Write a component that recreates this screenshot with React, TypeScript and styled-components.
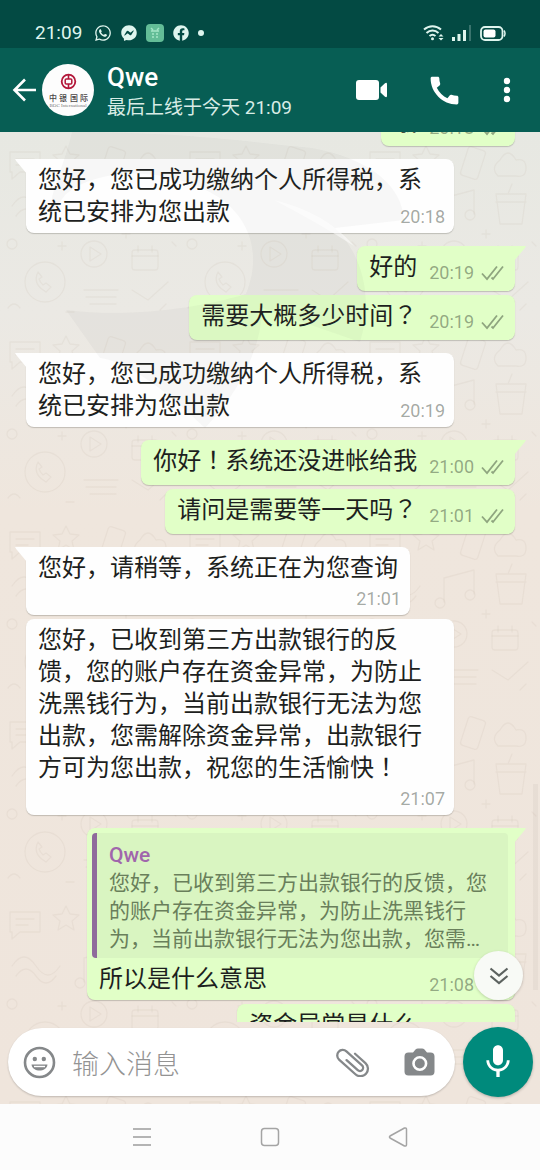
import React, { useLayoutEffect, useRef } from "react";
import styled, { createGlobalStyle, css } from "styled-components";
import { FaFacebook, FaFacebookMessenger, FaWhatsapp } from "react-icons/fa";
import { MdCall, MdMic } from "react-icons/md";

const GlobalStyle = createGlobalStyle`
  *, *::before, *::after { box-sizing: border-box; }
  body {
    margin: 0;
    font-family: Roboto, "Noto Sans CJK SC", sans-serif;
    color: #1d1f20;
  }
  button { border: 0; padding: 0; background: none; color: inherit; font: inherit; cursor: pointer; }
  svg { display: block; flex: none; }
`;

const Screen = styled.div`
  display: flex;
  flex-direction: column;
  height: 100vh;
  overflow: hidden;
`;

const StatusBar = styled.div`
  display: flex;
  align-items: center;
  justify-content: space-between;
  height: 48px;
  padding: 18px 34px 0 35px;
  background: #034a43;
  color: #dff5ee;
  font-size: 19px;
  line-height: 30px;
`;

const StatusGroup = styled.div<{ $gap: number }>`
  display: flex;
  align-items: center;
  gap: ${(p) => p.$gap}px;
`;

const Clock = styled.span`
  margin-right: 3px;
`;

const Header = styled.header`
  display: flex;
  align-items: center;
  height: 84px;
  padding: 0 6px 0 12px;
  background: #075e54;
  color: #fff;
  flex: none;
`;

const BackButton = styled.button`
  display: flex;
  align-items: center;
  gap: 6px;
`;

const Contact = styled.div`
  flex: 1;
  min-width: 0;
  padding: 4px 0 0 13px;
`;

const ContactName = styled.h1`
  margin: 0;
  font-size: 26px;
  font-weight: 500;
  line-height: 32px;
`;

const LastSeen = styled.p`
  margin: 0;
  font-size: 19px;
  line-height: 30px;
  color: #d8ece6;
  white-space: nowrap;
`;

const HeaderButton = styled.button<{ $width: number }>`
  display: flex;
  align-items: center;
  justify-content: center;
  width: ${(p) => p.$width}px;
  height: 56px;
`;

const Conversation = styled.main`
  position: relative;
  display: flex;
  flex: 1;
  flex-direction: column;
  min-height: 0;
  background: linear-gradient(#e7e8e2 0, #ebe9e4 180px, #efe6dd 380px, #efe5dc 100%);
`;

const Wallpaper = styled.svg`
  position: absolute;
  inset: 0;
  width: 100%;
  height: 100%;
`;

const Watermark = styled.svg`
  position: absolute;
  top: 0;
  left: 0;
  pointer-events: none;
`;

const MessageArea = styled.div`
  position: relative;
  flex: 1;
  min-height: 0;
`;

const MessageList = styled.div`
  display: flex;
  flex-direction: column;
  height: 100%;
  padding: 0 25px 8px 26px;
  overflow-y: auto;
  scrollbar-width: none;
`;

type Layout = "inline" | "tucked" | "below";

const tail = {
  in: css`
    border-top-left-radius: 0;
    &::before {
      content: "";
      position: absolute;
      top: 0;
      left: -11px;
      width: 12px;
      height: 15px;
      background: inherit;
      clip-path: polygon(0 0, 100% 0, 100% 100%, 10% 14%);
    }
  `,
  out: css`
    border-top-right-radius: 0;
    &::before {
      content: "";
      position: absolute;
      top: 0;
      right: -11px;
      width: 12px;
      height: 15px;
      background: inherit;
      clip-path: polygon(0 0, 100% 0, 90% 14%, 0 100%);
    }
  `,
};

const Bubble = styled.article<{ $side: "in" | "out"; $first: boolean }>`
  position: relative;
  flex: none;
  max-width: calc(100% - 61px);
  margin-top: ${(p) => (p.$first ? 13 : 4)}px;
  border-radius: 8px;
  align-self: ${(p) => (p.$side === "in" ? "flex-start" : "flex-end")};
  background: ${(p) => (p.$side === "in" ? "#fefefe" : "#e1ffc7")};
  box-shadow: 0 1px 1px rgba(60, 60, 50, 0.25);
  &:first-child { margin-top: 0; }
  ${(p) => p.$first && tail[p.$side]}
`;

const Quote = styled.blockquote`
  margin: 5px 7px 0 5px;
  padding: 8px 12px 5px;
  border-left: 5px solid #8f6a9c;
  border-radius: 4px;
  background: #d9f5c1;
`;

const Body = styled.div<{ $layout: Layout }>`
  display: flex;
  ${(p) =>
    p.$layout === "inline"
      ? css`
          align-items: flex-end;
          justify-content: space-between;
          gap: 12px;
          padding: 5px 11px 8px 12px;
          ${Quote} + & { padding-bottom: 5px; }
        `
      : css`
          flex-direction: column;
          padding: 5px 12px 6px;
        `}
`;

const MessageText = styled.p`
  margin: 0;
  font-size: 24px;
  line-height: 32px;
`;

const CenteredMark = styled.span`
  font-family: "Noto Sans CJK TC", sans-serif;
  line-height: 1;
`;

const Meta = styled.div<{ $layout: Layout }>`
  display: flex;
  align-items: center;
  gap: 7px;
  height: 20px;
  font-size: 18px;
  line-height: 20px;
  color: rgba(20, 30, 20, 0.4);
  ${(p) =>
    p.$layout !== "inline" &&
    css`
      align-self: flex-end;
      margin-top: ${p.$layout === "tucked" ? -21 : 5}px;
      margin-right: -3px;
    `}
`;

const QuoteAuthor = styled.div`
  font-size: 21px;
  font-weight: 500;
  line-height: 28px;
  color: #a066ac;
`;

const QuoteText = styled.p`
  display: -webkit-box;
  margin: 0;
  overflow: hidden;
  font-size: 21px;
  line-height: 28px;
  color: #697f5b;
  -webkit-box-orient: vertical;
  -webkit-line-clamp: 3;
`;

const ScrollDown = styled.button`
  position: absolute;
  right: 17px;
  bottom: 22px;
  display: flex;
  align-items: center;
  justify-content: center;
  width: 49px;
  height: 49px;
  border-radius: 50%;
  background: #f8faf6;
  box-shadow: 0 1px 3px rgba(0, 0, 0, 0.18);
`;

const ScrollThumb = styled.div`
  position: absolute;
  right: 2px;
  bottom: 32px;
  width: 5px;
  height: 206px;
  background: rgba(120, 100, 90, 0.06);
`;

const Composer = styled.form`
  position: relative;
  display: flex;
  align-items: center;
  gap: 8px;
  padding: 5px 7px 7px 8px;
`;

const InputPill = styled.div`
  display: flex;
  flex: 1;
  align-items: center;
  min-width: 0;
  height: 68px;
  padding: 0 20px 0 15px;
  border-radius: 34px;
  background: #fff;
  box-shadow: 0 1px 2px rgba(0, 0, 0, 0.2);
  color: #85888a;
`;

const MessageInput = styled.input`
  flex: 1;
  min-width: 0;
  height: 44px;
  margin-left: 16px;
  padding: 5px 0 0;
  border: 0;
  outline: 0;
  background: none;
  font-family: inherit;
  font-size: 27px;
  font-weight: 300;
  color: #1d1f20;
  &::placeholder { color: #939393; opacity: 1; }
`;

const PillButton = styled.button`
  display: flex;
  & + & { margin-left: 34px; }
`;

const MicButton = styled.button`
  display: flex;
  align-items: center;
  justify-content: center;
  width: 70px;
  height: 70px;
  border-radius: 50%;
  background: #008a7c;
  box-shadow: 0 1px 3px rgba(0, 0, 0, 0.25);
  color: #fff;
`;

const SystemNav = styled.nav`
  display: flex;
  flex: none;
  align-items: center;
  justify-content: center;
  height: 66px;
  background: #fcfcfc;
`;

const NavButton = styled.button`
  display: flex;
  align-items: center;
  justify-content: center;
  width: 128px;
  height: 48px;
`;

const Ticks = () => (
  <svg width="23" height="16" viewBox="0 0 23 16" fill="none" stroke="currentColor" strokeWidth="1.8" role="img" aria-label="已送达">
    <path d="M1 8.5 6 14 16 1.5M10.5 12.5 12 14 22 1.5" />
  </svg>
);

const Avatar = () => (
  <svg width="52" height="52" viewBox="0 0 52 52" role="img" aria-label="中银国际">
    <circle cx="26" cy="26" r="26" fill="#fdfdfd" />
    <g fill="none" stroke="#b3173a">
      <circle cx="26.5" cy="17.5" r="6.8" strokeWidth="1.8" />
      <rect x="23.2" y="15" width="6.6" height="5" rx="1" strokeWidth="1.5" />
      <path d="M26.5 11v4M26.5 20v4" strokeWidth="1.6" />
    </g>
    <text x="7" y="37" fontSize="8" fontWeight="500" fontFamily="'Noto Sans CJK SC', sans-serif" fill="#4a4546">
      <tspan x="7">中</tspan>
      <tspan x="17">银</tspan>
      <tspan x="28">国</tspan>
      <tspan x="38">际</tspan>
    </text>
    <text x="26" y="43" fontSize="5" textAnchor="middle" fontFamily="'Liberation Serif', serif" fill="#777">
      BOC International
    </text>
  </svg>
);

interface Message {
  side: "in" | "out";
  time: string;
  text: string;
  layout: Layout;
  first?: boolean;
  quote?: { author: string; text: string };
}

const REPLY =
  "您好，已收到第三方出款银行的反馈，您的账户存在资金异常，为防止洗黑钱行为，当前出款银行无法为您出款，您需解除资金异常，出款银行方可为您出款，祝您的生活愉快！";

const messages: Message[] = [
  { side: "out", time: "20:18", text: "哦", layout: "inline" },
  { side: "in", time: "20:18", text: "您好，您已成功缴纳个人所得税，系统已安排为您出款", layout: "tucked", first: true },
  { side: "out", time: "20:19", text: "好的", layout: "inline", first: true },
  { side: "out", time: "20:19", text: "需要大概多少时间？", layout: "inline" },
  { side: "in", time: "20:19", text: "您好，您已成功缴纳个人所得税，系统已安排为您出款", layout: "tucked", first: true },
  { side: "out", time: "21:00", text: "你好！系统还没进帐给我", layout: "inline", first: true },
  { side: "out", time: "21:01", text: "请问是需要等一天吗？", layout: "inline" },
  { side: "in", time: "21:01", text: "您好，请稍等，系统正在为您查询", layout: "below", first: true },
  { side: "in", time: "21:07", text: REPLY, layout: "below" },
  { side: "out", time: "21:08", text: "所以是什么意思", layout: "inline", first: true, quote: { author: "Qwe", text: REPLY } },
  { side: "out", time: "21:08", text: "资金异常是什么", layout: "inline" },
];

// Question and exclamation marks sit in the middle of their cell, commas at its left.
const withCenteredMarks = (text: string) =>
  text.split(/([？！])/).map((part, i) =>
    part === "？" || part === "！" ? (
      <CenteredMark key={i} lang="zh-TW">
        {part}
      </CenteredMark>
    ) : (
      part
    ),
  );

const MessageBubble = ({ message }: { message: Message }) => (
  <Bubble $side={message.side} $first={!!message.first}>
    {message.quote && (
      <Quote>
        <QuoteAuthor>{message.quote.author}</QuoteAuthor>
        <QuoteText>{message.quote.text}</QuoteText>
      </Quote>
    )}
    <Body $layout={message.layout}>
      <MessageText>{withCenteredMarks(message.text)}</MessageText>
      <Meta $layout={message.layout}>
        <time>{message.time}</time>
        {message.side === "out" && <Ticks />}
      </Meta>
    </Body>
  </Bubble>
);

const FIRST_VISIBLE_OFFSET = 31;

export default function App() {
  const list = useRef<HTMLDivElement>(null);

  useLayoutEffect(() => {
    if (list.current) list.current.scrollTop = FIRST_VISIBLE_OFFSET;
  }, []);

  return (
    <Screen lang="zh-CN">
      <GlobalStyle />
      <StatusBar>
        <StatusGroup $gap={9}>
          <Clock>21:09</Clock>
          <FaWhatsapp size={18} />
          <FaFacebookMessenger size={16} />
          <svg width="18" height="18" viewBox="0 0 18 18">
            <rect width="18" height="18" rx="4" fill="#63bd97" />
            <path d="M5 4l2 2M13 4l-2 2M5 7h8M6 10h2M10 10h2M6 13h2M10 13h2" stroke="#a5e6c8" strokeWidth="1.5" />
          </svg>
          <FaFacebook size={16} />
          <svg width="6" height="6" viewBox="0 0 6 6">
            <circle cx="3" cy="3" r="3" fill="currentColor" />
          </svg>
        </StatusGroup>
        <StatusGroup $gap={8}>
          <svg width="21" height="16" viewBox="0 0 21 16" fill="none" stroke="currentColor" strokeWidth="2">
            <path d="M1 4.5c5-4.5 12-4.5 17 0M3.5 8c3.5-3.2 8.5-3.2 12 0M6.5 11c2-1.7 4-1.7 6 0" />
            <circle cx="9.5" cy="13.8" r="1.5" fill="currentColor" stroke="none" />
            <path d="M15.5 11.5l2.5-2.5 2.5 2.5zM15.5 13l2.5 2.5 2.5-2.5z" fill="currentColor" stroke="none" />
          </svg>
          <svg width="20" height="16" viewBox="0 0 20 16" fill="currentColor">
            <path d="M0 12h3v4H0zM5.5 9h3v7h-3zM11 5h3v11h-3z" />
            <path d="M17 0h2v16h-2z" opacity=".25" />
          </svg>
          <svg width="26" height="15" viewBox="0 0 26 15">
            <rect x="1" y="1" width="21.5" height="13" rx="4" fill="none" stroke="currentColor" strokeWidth="1.8" />
            <rect x="3.5" y="3.5" width="12" height="8" rx="2" fill="#fff" />
            <path d="M24 4.5q2 3 0 6" fill="none" stroke="currentColor" strokeWidth="1.5" />
          </svg>
        </StatusGroup>
      </StatusBar>

      <Header>
        <BackButton type="button" aria-label="返回">
          <svg width="24" height="24" viewBox="0 0 24 24" fill="none" stroke="currentColor" strokeWidth="2.6">
            <path d="M24 12H2.5M13 1.5 2.5 12 13 22.5" />
          </svg>
          <Avatar />
        </BackButton>
        <Contact>
          <ContactName>Qwe</ContactName>
          <LastSeen>最后上线于今天 21:09</LastSeen>
        </Contact>
        <HeaderButton $width={72} type="button" aria-label="视频通话">
          <svg width="32" height="20" viewBox="0 0 32 20" fill="currentColor">
            <rect width="23" height="20" rx="3" />
            <path d="M24.5 7.500 29 3.200q2-1.200 2 1v11.600q0 2.200-2 1l-4.500-4.300z" />
          </svg>
        </HeaderButton>
        <HeaderButton $width={72} type="button" aria-label="语音通话">
          <MdCall size={37} />
        </HeaderButton>
        <HeaderButton $width={54} type="button" aria-label="更多选项">
          <svg width="8" height="26" viewBox="0 0 8 26" fill="currentColor">
            <circle cx="4" cy="4" r="3.2" />
            <circle cx="4" cy="13" r="3.2" />
            <circle cx="4" cy="22" r="3.2" />
          </svg>
        </HeaderButton>
      </Header>

      <Conversation>
        <Wallpaper aria-hidden="true">
          <defs>
            <pattern id="doodles" width="180" height="190" patternUnits="userSpaceOnUse">
              <g fill="none" stroke="#b9a898" strokeOpacity=".13" strokeWidth="1.3" strokeLinejoin="round" strokeLinecap="round">
                <circle cx="45" cy="150" r="20" />
                <path d="M38 140q-6 12 8 20l5-5-5-4-3 2q-3-3-4-6l3-2z" />
                <circle cx="94" cy="122" r="13" />
                <path d="M90 115v14l11-7z" />
                <rect x="132" y="118" width="26" height="20" rx="3" />
                <path d="M132 124h26M138 114v6M152 114v6" />
                <path d="M10 20h30v20H20l-8 7v-7h-2zM16 27h18M16 33h12" />
                <path d="M66 14l4 8 9 1-7 6 2 9-8-5-8 5 2-9-7-6 9-1z" />
                <rect x="104" y="16" width="18" height="30" rx="3" transform="rotate(18 113 31)" />
                <path d="M140 28q8-14 16 0q10-2 10 8t-10 8h-18q-8-8 2-16" />
                <path d="M12 74q12-18 24 0t24 0M16 84q10-14 20 0t20 0" />
                <path d="M84 66l30-8v24M84 66v24" />
                <circle cx="80" cy="91" r="5" />
                <circle cx="110" cy="83" r="5" />
                <path d="M136 62h30l-4 30h-22zM136 70h30M148 62l4-10" />
                <path d="M84 158h34M86 165h30M90 172h26M132 158l16 10 20-18" />
                <circle cx="12" cy="112" r="5" />
                <path d="M62 110v8M58 114h8M126 98v8M122 102h8M172 110l4 4M8 176q6-8 12 0M66 180h8M160 178l6-6" />
              </g>
            </pattern>
          </defs>
          <rect width="100%" height="100%" fill="url(#doodles)" />
        </Wallpaper>

        <MessageArea>
          <MessageList ref={list}>
            {messages.map((m, i) => (
              <MessageBubble key={i} message={m} />
            ))}
          </MessageList>
          <ScrollThumb />
          <ScrollDown type="button" aria-label="滚动到底部">
            <svg width="20" height="18" viewBox="0 0 20 18" fill="none" stroke="#5d6360" strokeWidth="2.2">
              <path d="M1.5 1.5 10 8.5l8.5-7M1.5 9 10 16l8.5-7" />
            </svg>
          </ScrollDown>
        </MessageArea>

        <Watermark width="420" height="300" viewBox="0 0 420 300" aria-hidden="true" fill="#5a6460">
          <path fillOpacity=".045" d="M72 0C64 36 48 62 52 80L66 62C100 34 170 34 220 66C250 88 262 122 246 162C200 176 130 186 66 178L100 226C130 230 170 262 205 296C240 260 262 214 262 176L360 210C378 150 350 110 335 96L404 88C402 40 340 16 290 14C220 6 160 0 72 0Z" />
          <path fill="#fff" fillOpacity=".5" d="M274 68Q325 80 354 114Q320 92 274 68Z" />
        </Watermark>

        <Composer onSubmit={(e) => e.preventDefault()}>
          <InputPill>
            <PillButton type="button" aria-label="表情">
              <svg width="33" height="33" viewBox="0 0 33 33" fill="none">
                <circle cx="16.5" cy="16.5" r="14.5" stroke="currentColor" strokeWidth="2.6" />
                <circle cx="11.8" cy="13" r="2.2" fill="currentColor" />
                <circle cx="20.8" cy="13" r="2.2" fill="currentColor" />
                <path d="M8.500 18.500h16c-1 8-15 8-16 0z" fill="currentColor" />
                <path d="M11 20.500h11" stroke="#fff" strokeWidth="1.4" />
              </svg>
            </PillButton>
            <MessageInput aria-label="输入消息" placeholder="输入消息" />
            <PillButton type="button" aria-label="附件">
              <svg width="34" height="30" viewBox="-17 -15 34 30" fill="none" stroke="currentColor" strokeWidth="2.3" strokeLinecap="round">
                <path transform="rotate(42)" d="M-4-7.500H10a7.500 7.500 0 0 1 0 15H-12a5.500 5.500 0 0 1 0-11H9a3.200 3.200 0 0 1 0 6.400H-6" />
              </svg>
            </PillButton>
            <PillButton type="button" aria-label="相机">
              <svg width="31" height="28" viewBox="0 0 31 28">
                <path d="M4.500 4.500H9l2.500-3Q12.500.5 14 .5h4q1.500 0 2.500 1l2.500 3h3.500q4 0 4 4v15q0 4-4 4h-22q-4 0-4-4v-15q0-4 4-4z" fill="currentColor" />
                <circle cx="15.8" cy="15.5" r="6.3" fill="none" stroke="#fff" strokeWidth="2.6" />
              </svg>
            </PillButton>
          </InputPill>
          <MicButton type="button" aria-label="语音消息">
            <MdMic size={40} />
          </MicButton>
        </Composer>
      </Conversation>

      <SystemNav>
        <NavButton type="button" aria-label="最近任务">
          <svg width="20" height="18" viewBox="0 0 20 18" stroke="#9c9c9c" strokeWidth="1.5">
            <path d="M1 1h18M1 9h18M1 17h18" />
          </svg>
        </NavButton>
        <NavButton type="button" aria-label="主屏幕">
          <svg width="20" height="20" viewBox="0 0 20 20" fill="none" stroke="#a4a4a4" strokeWidth="1.5">
            <rect x="1.5" y="1.5" width="17" height="17" rx="3" />
          </svg>
        </NavButton>
        <NavButton type="button" aria-label="返回上一页">
          <svg width="20" height="20" viewBox="0 0 20 20" fill="none" stroke="#a4a4a4" strokeWidth="1.5" strokeLinejoin="round">
            <path d="M2 9q-1 1 0 2l14.500 8q2 .5 2-1.500v-15q0-2-2-1.500z" />
          </svg>
        </NavButton>
      </SystemNav>
    </Screen>
  );
}
